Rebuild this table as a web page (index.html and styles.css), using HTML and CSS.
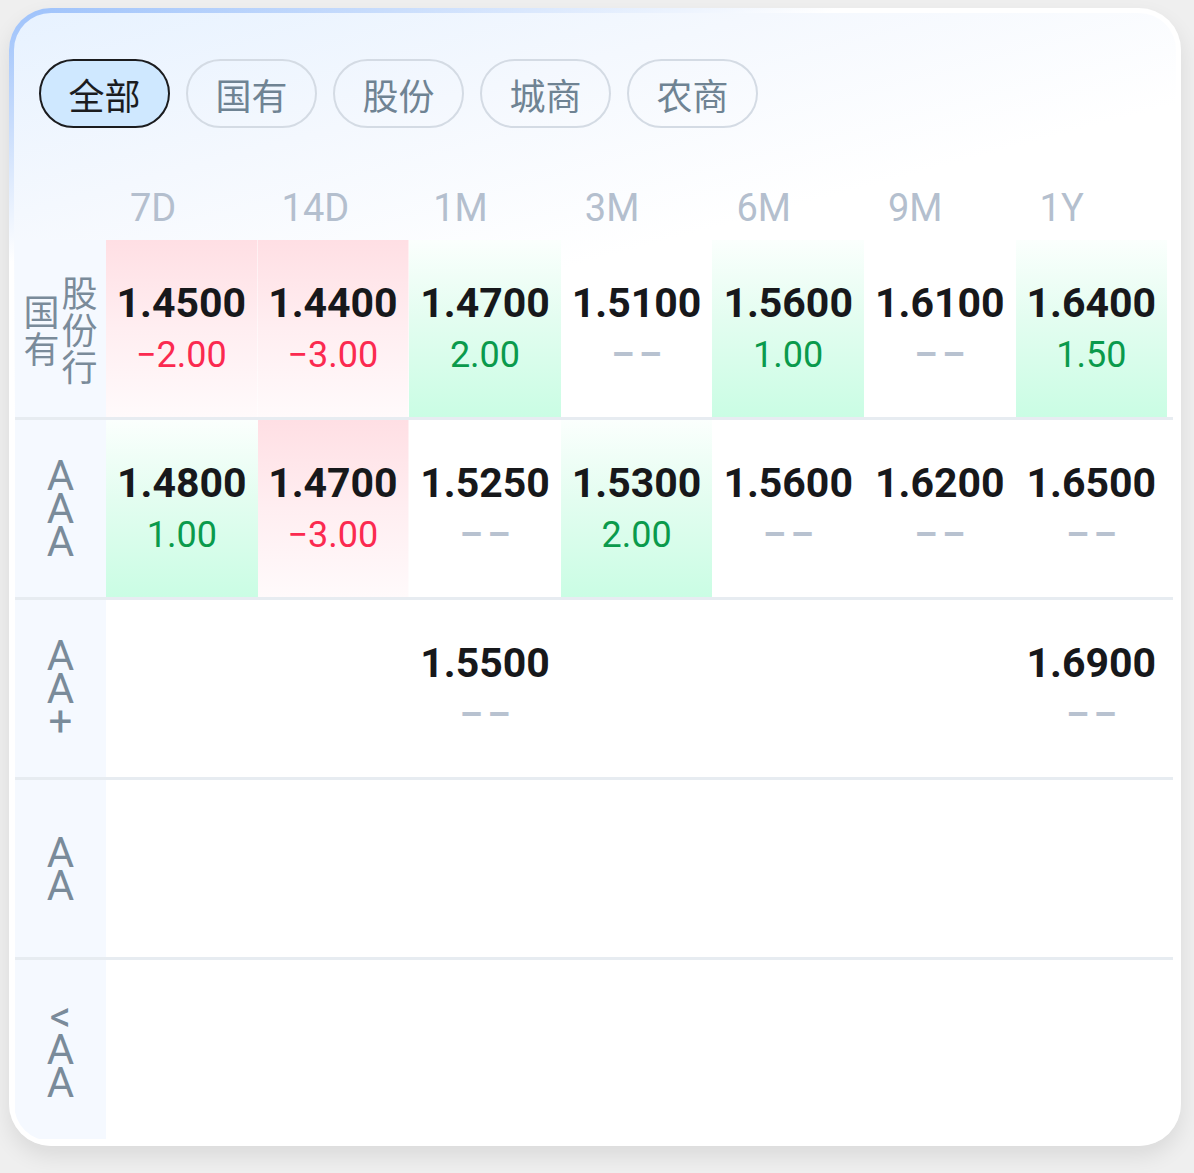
FILE: index.html
```html
<!DOCTYPE html>
<html lang="zh">
<head>
<meta charset="utf-8">
<title>存单利率</title>
<link rel="stylesheet" href="styles.css">
</head>
<body>
<div class="card">
  <div class="inner">
    <div class="tabs">
      <div class="chip active">全部</div>
      <div class="chip">国有</div>
      <div class="chip">股份</div>
      <div class="chip">城商</div>
      <div class="chip">农商</div>
    </div>
    <div class="table">
      <div class="row head">
        <div class="lab"></div>
        <div class="hc">7D</div>
        <div class="hc">14D</div>
        <div class="hc">1M</div>
        <div class="hc">3M</div>
        <div class="hc">6M</div>
        <div class="hc">9M</div>
        <div class="hc">1Y</div>
      </div>
      <div class="row">
        <div class="lab"><span class="stack cjk">国有</span><span class="stack cjk">股份行</span></div>
        <div class="cell down"><div class="num">1.4500</div><div class="chg neg">−2.00</div></div>
        <div class="cell down"><div class="num">1.4400</div><div class="chg neg">−3.00</div></div>
        <div class="cell up"><div class="num">1.4700</div><div class="chg pos">2.00</div></div>
        <div class="cell"><div class="num">1.5100</div><div class="chg nil">––</div></div>
        <div class="cell up"><div class="num">1.5600</div><div class="chg pos">1.00</div></div>
        <div class="cell"><div class="num">1.6100</div><div class="chg nil">––</div></div>
        <div class="cell up"><div class="num">1.6400</div><div class="chg pos">1.50</div></div>
      </div>
      <div class="row">
        <div class="lab"><span class="stack lat">AAA</span></div>
        <div class="cell up"><div class="num">1.4800</div><div class="chg pos">1.00</div></div>
        <div class="cell down"><div class="num">1.4700</div><div class="chg neg">−3.00</div></div>
        <div class="cell"><div class="num">1.5250</div><div class="chg nil">––</div></div>
        <div class="cell up"><div class="num">1.5300</div><div class="chg pos">2.00</div></div>
        <div class="cell"><div class="num">1.5600</div><div class="chg nil">––</div></div>
        <div class="cell"><div class="num">1.6200</div><div class="chg nil">––</div></div>
        <div class="cell"><div class="num">1.6500</div><div class="chg nil">––</div></div>
      </div>
      <div class="row">
        <div class="lab"><span class="stack lat">AA+</span></div>
        <div class="cell"></div>
        <div class="cell"></div>
        <div class="cell"><div class="num">1.5500</div><div class="chg nil">––</div></div>
        <div class="cell"></div>
        <div class="cell"></div>
        <div class="cell"></div>
        <div class="cell"><div class="num">1.6900</div><div class="chg nil">––</div></div>
      </div>
      <div class="row">
        <div class="lab"><span class="stack lat">AA</span></div>
        <div class="cell"></div><div class="cell"></div><div class="cell"></div><div class="cell"></div><div class="cell"></div><div class="cell"></div><div class="cell"></div>
      </div>
      <div class="row last">
        <div class="lab"><span class="stack lat">&lt;AA</span></div>
        <div class="cell"></div><div class="cell"></div><div class="cell"></div><div class="cell"></div><div class="cell"></div><div class="cell"></div><div class="cell"></div>
      </div>
    </div>
  </div>
</div>
</body>
</html>
```
FILE: styles.css
```css
* { box-sizing: border-box; }
html, body { margin: 0; padding: 0; }
body {
  background: #efefef;
  font-family: Roboto, "Noto Sans CJK SC", sans-serif;
  padding: 8px 13px 27px 9px;
}
.card {
  border-radius: 42px;
  padding: 5px;
  background: linear-gradient(163deg, #9cc1fb 0%, #c9ddfc 8%, #ffffff 17%, #ffffff 100%);
  box-shadow: 0 10px 22px rgba(0, 0, 0, 0.09);
}
.inner {
  border-radius: 37px;
  overflow: hidden;
  background: linear-gradient(165deg, #e7f2ff 0%, #f4f8fe 14%, #ffffff 28%, #ffffff 100%);
  padding: 46px 3px 2px 1px;
}
.tabs {
  display: flex;
  gap: 16px;
  padding-left: 24px;
}
.chip {
  flex: 0 0 131px;
  width: 131px;
  height: 69px;
  border-radius: 35px;
  border: 2.5px solid #d4dbe4;
  color: #6f8393;
  font-family: "Noto Sans CJK SC", sans-serif;
  font-size: 36px;
  display: flex;
  align-items: center;
  justify-content: center;
}
.chip.active {
  border-color: #1b1c1f;
  background: #cfe8ff;
  color: #1b1c1f;
}
.table {
  margin-top: 48px;
}
.row {
  display: grid;
  grid-template-columns: 91px repeat(7, 151.6px);
  height: 180px;
  border-bottom: 3px solid #e7ecf1;
}
.row.head {
  height: 64px;
  border-bottom: none;
}
.row.last {
  border-bottom: none;
  height: 179px;
}
.lab {
  background: #f5f9ff;
  display: flex;
  align-items: center;
  justify-content: center;
  color: #7a8b9a;
}
.head .lab { background: transparent; }
.hc {
  color: #b4bfce;
  font-size: 38px;
  line-height: 64px;
  padding-left: 24px;
}
.stack {
  display: block;
  word-break: break-all;
  text-align: center;
}
.stack.cjk {
  font-family: "Noto Sans CJK SC", sans-serif;
  font-size: 36px;
  line-height: 37px;
  width: 38px;
}
.stack.lat {
  font-size: 42px;
  line-height: 33px;
  width: 42px;
}
.cell {
  display: flex;
  flex-direction: column;
  align-items: center;
  justify-content: center;
}
.cell.down {
  background: linear-gradient(180deg, #ffdfe4 0%, #ffeef1 50%, #fffafb 100%);
  border-right: 1px solid rgba(255, 255, 255, 0.5);
}
.cell.up {
  background: linear-gradient(180deg, #fbfffd 0%, #e3fdf0 45%, #cafde4 100%);
}
.num {
  font-size: 41px;
  font-weight: 700;
  line-height: 52px;
  color: #17181b;
}
.chg {
  font-size: 36px;
  line-height: 52px;
}
.neg { color: #fb2a50; }
.pos { color: #0a9a4c; }
.nil { color: #b8c2d0; letter-spacing: 5px; font-weight: 700; padding-left: 5px; }
```
